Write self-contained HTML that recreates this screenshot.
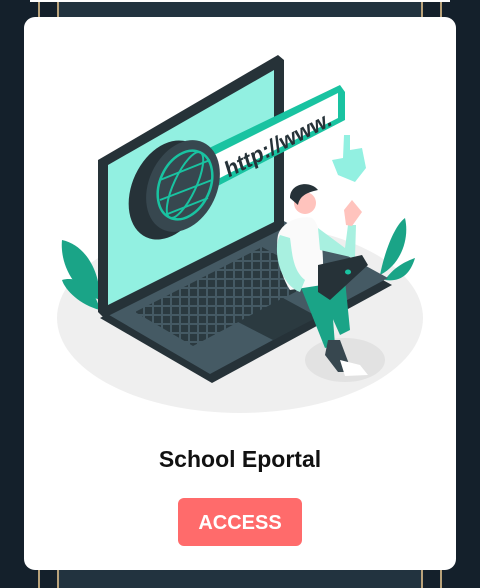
<!DOCTYPE html>
<html><head><meta charset="utf-8"><style>
html,body{margin:0;padding:0}
body{width:480px;height:588px;position:relative;overflow:hidden;background:#14202b;font-family:"Liberation Sans",sans-serif}
.panel{position:absolute;left:58px;top:0;width:364px;height:588px;background:#22333f}
.gl{position:absolute;top:0;width:2px;height:588px;background:#b9a27a}
.card{position:absolute;left:24px;top:17px;width:432px;height:553px;background:#fff;border-radius:11px}
.strip{position:absolute;left:30px;top:0;width:420px;height:2px;background:#fff}
h1{position:absolute;left:0;width:480px;top:446px;margin:0;text-align:center;font-size:23px;font-weight:bold;color:#111}
.btn{position:absolute;left:178px;top:498px;width:124px;height:48px;border-radius:6px;background:#ff6b6b;color:#fff;font-weight:bold;font-size:20px;text-align:center;line-height:50px}
</style></head><body>
<div class="panel"></div>
<div class="gl" style="left:38px"></div><div class="gl" style="left:57px"></div>
<div class="gl" style="left:421px"></div><div class="gl" style="left:440px"></div>
<div class="strip"></div>
<div class="card"></div>
<svg style="position:absolute;left:0;top:0" width="480" height="588" viewBox="0 0 480 588">
<defs>
<pattern id="keys" width="9" height="9" patternUnits="userSpaceOnUse">
<rect width="9" height="9" fill="#455a64"/><rect x="1" y="1" width="7" height="7" fill="#2b3a40"/>
</pattern>
</defs>
<ellipse cx="240" cy="318" rx="183" ry="95" fill="#efefef"/>
<ellipse cx="345" cy="360" rx="40" ry="22" fill="#e2e2e2"/>
<!-- plants -->
<path d="M100 300 C70 290 60 260 62 240 C85 245 100 270 100 300Z" fill="#1aa487"/>
<path d="M100 310 C80 305 65 290 62 280 C80 275 95 290 100 310Z" fill="#1aa487"/>
<path d="M380 275 C385 250 395 225 405 218 C410 240 400 265 380 275Z" fill="#1aa487"/>
<path d="M385 280 C395 265 410 260 415 258 C410 275 400 282 385 280Z" fill="#1aa487"/>
<!-- base -->
<path d="M100 318 L282 225 L392 285 L212 383 Z" fill="#263238"/>
<path d="M104 312 L282 220 L388 278 L210 374 Z" fill="#455a64"/>
<g transform="matrix(1 -0.52 1.1 0.58 0 0)">
</g>
<path d="M135 312 L262 247 L320 279 L193 346 Z" fill="url(#keys)"/>
<path d="M238 322 L283 298 L318 317 L273 340 Z" fill="#2b3a40"/>
<!-- screen -->
<path d="M98 160 L278 55 L284 60 L284 228 L104 318 L98 312 Z" fill="#263238"/>
<path d="M108 165 L274 70 L274 222 L108 305 Z" fill="#92f0e1"/>
<!-- url bar -->
<path d="M205 150 L340 85 L345 92 L345 120 L210 190 Z" fill="#19c3a1"/>
<path d="M212 156 L338 93 L338 118 L212 182 Z" fill="#fff"/>
<text x="0" y="0" transform="translate(228,178) rotate(-27) skewX(-10)" font-size="22" font-weight="bold" fill="#263238" font-family="Liberation Sans">http://www.</text>
<!-- globe -->
<ellipse cx="168" cy="190" rx="36" ry="52" transform="rotate(25 168 190)" fill="#263238"/>
<ellipse cx="183" cy="186" rx="34" ry="48" transform="rotate(25 183 186)" fill="#37474f"/>
<ellipse cx="185" cy="185" rx="25" ry="36" transform="rotate(25 185 185)" fill="none" stroke="#19c3a1" stroke-width="2.5"/>
<ellipse cx="185" cy="185" rx="11" ry="36" transform="rotate(25 185 185)" fill="none" stroke="#19c3a1" stroke-width="2"/>
<path d="M160 180 L210 160 M160 200 L212 180 M165 215 L208 198" stroke="#19c3a1" stroke-width="2"/>
<!-- hand cursor -->
<path d="M344 135 L350 135 L350 150 L362 148 L366 168 L355 182 L338 175 L332 160 L343 158 Z" fill="#92f0e1"/>
<!-- person -->
<path d="M320 290 L345 280 L350 330 L340 335 Z" fill="#1aa487"/>
<path d="M300 285 L330 280 L335 345 L325 348 Z" fill="#1aa487"/>
<path d="M328 340 L340 340 L352 372 L338 372 L325 355 Z" fill="#37474f"/>
<path d="M340 360 L360 365 L368 375 L345 376 Z" fill="#fff"/>
<path d="M278 235 C282 222 300 215 312 218 C322 225 325 262 322 285 L290 290 C280 275 275 250 278 235Z" fill="#fafafa"/>
<path d="M280 235 C272 250 280 285 300 292 L305 280 C292 270 292 250 290 238Z" fill="#a8f0e0"/>
<path d="M318 228 L345 248 L348 225 L356 225 L355 258 L320 250Z" fill="#a8f0e0"/>
<path d="M344 210 L352 200 L362 212 L352 226 L346 225Z" fill="#ffc3bd"/>
<circle cx="305" cy="203" r="11" fill="#ffc3bd"/>
<path d="M290 198 C290 183 310 180 318 190 C310 192 300 194 298 205 Z" fill="#263238"/>
<path d="M318 265 L362 255 L368 265 L330 300 L318 292 Z" fill="#263238"/>
<ellipse cx="348" cy="272" rx="3" ry="2.5" fill="#19c3a1"/>
</svg>
<h1>School Eportal</h1>
<div class="btn">ACCESS</div>
</body></html>
